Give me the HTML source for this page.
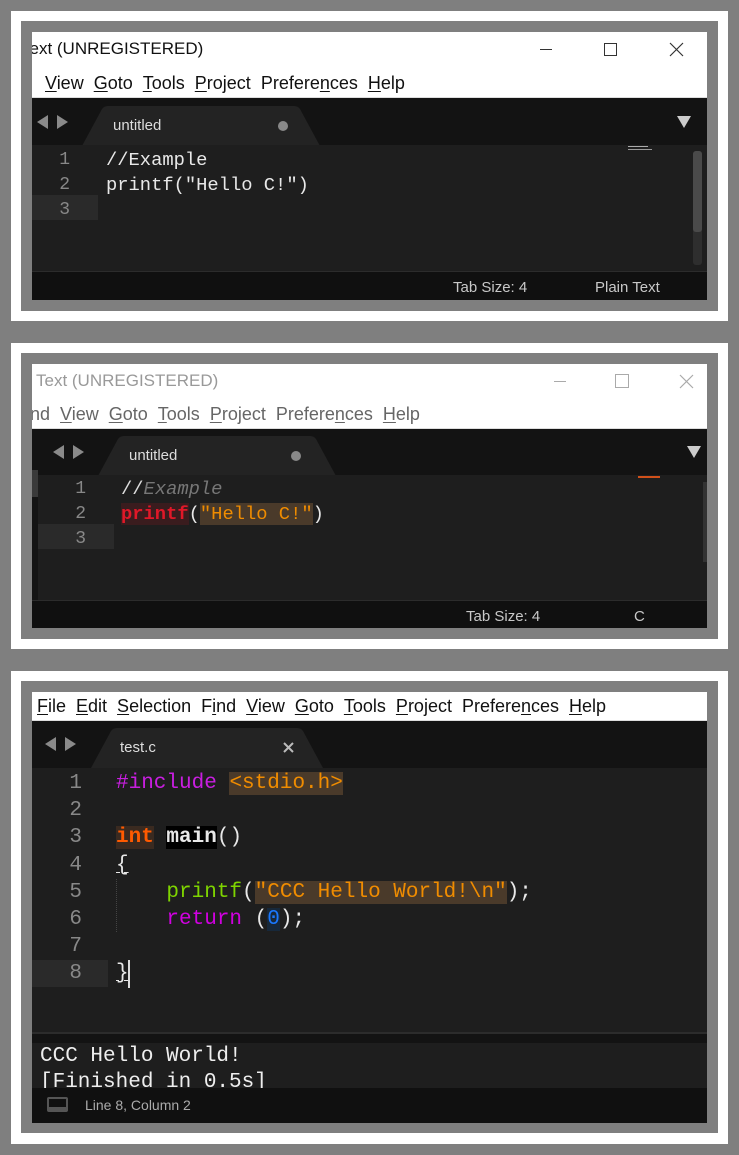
<!DOCTYPE html>
<html><head><meta charset="utf-8"><style>
*{margin:0;padding:0;box-sizing:border-box}
body{width:739px;height:1155px;background:#7f7f7f;position:relative;overflow:hidden;font-family:"Liberation Sans",sans-serif}
.a{position:absolute}
.w{background:#fff}
.g{background:#7f7f7f}
.win{position:absolute;left:32px;width:675px;overflow:hidden;background:#fff}
.t{position:absolute;white-space:nowrap}
.mono{font-family:"Liberation Mono",monospace;white-space:pre}
u{text-decoration:underline;text-underline-offset:2px;text-decoration-thickness:1px}
.menu{font-size:18px}
</style></head><body>

<!-- Panel 1 -->
<div class="a w" style="left:11px;top:11px;width:717px;height:310px"></div>
<div class="a g" style="left:21px;top:21px;width:697px;height:290px"></div>
<div class="win" style="top:32px;height:268px">
  <div class="t" style="left:-11px;top:7px;font-size:17px;color:#111">Text (UNREGISTERED)</div>
  <div class="a" style="left:508px;top:17px;width:12px;height:1px;background:#333"></div>
  <div class="a" style="left:572px;top:11px;width:13px;height:13px;border:1px solid #333"></div>
  <svg class="a" style="left:637px;top:10px" width="15" height="15"><path d="M1 1L14 14M14 1L1 14" stroke="#333" stroke-width="1.2"/></svg>
  <div class="t menu" style="left:13px;top:41px;color:#111"><u>V</u>iew&nbsp;&nbsp;<u>G</u>oto&nbsp;&nbsp;<u>T</u>ools&nbsp;&nbsp;<u>P</u>roject&nbsp;&nbsp;Prefere<u>n</u>ces&nbsp;&nbsp;<u>H</u>elp</div>
  <div class="a" style="left:0;top:65px;width:675px;height:1px;background:#ddd"></div>
  <div class="a" style="left:0;top:66px;width:675px;height:47px;background:#131313"></div>
  <svg class="a" style="left:5px;top:83px" width="32" height="14"><path d="M0 7L11 0V14Z M31 7L20 0V14Z" fill="#8a8a8a"/></svg>
  <svg class="a" style="left:50px;top:74px" width="240" height="40"><path d="M0 40L20 3Q22 0 26 0H212Q216 0 218 3L238 40Z" fill="#232323"/></svg>
  <div class="t" style="left:81px;top:85px;font-size:15px;color:#ddd">untitled</div>
  <div class="a" style="left:246px;top:89px;width:10px;height:10px;border-radius:50%;background:#888"></div>
  <svg class="a" style="left:645px;top:84px" width="14" height="12"><path d="M0 0H14L7 12Z" fill="#ccc"/></svg>
  <div class="a" style="left:0;top:113px;width:675px;height:126px;background:#1e1e1e"></div>
  <div class="a" style="left:0;top:163px;width:66px;height:25px;background:#2a2a2a"></div>
  <div class="t mono" style="left:20px;top:116px;font-size:18px;line-height:25px;color:#888;text-align:right;width:18px">1<br>2<br>3</div>
  <div class="t mono" style="left:74px;top:116px;font-size:18.8px;line-height:25px;color:#e8e8e8">//Example<br>printf("Hello C!")</div>
  <div class="a" style="left:596px;top:114px;width:20px;height:1px;background:#aaa"></div>
  <div class="a" style="left:596px;top:117px;width:24px;height:1px;background:#999"></div>
  <div class="a" style="left:661px;top:119px;width:9px;height:114px;border-radius:3px;background:#2e2e2e"></div>
  <div class="a" style="left:661px;top:119px;width:9px;height:81px;border-radius:3px;background:#4a4a4a"></div>
  <div class="a" style="left:0;top:239px;width:675px;height:1px;background:#2c2c2c"></div>
  <div class="a" style="left:0;top:240px;width:675px;height:28px;background:#101010"></div>
  <div class="t" style="left:421px;top:247px;font-size:15px;color:#c8c8c8">Tab Size: 4</div>
  <div class="t" style="left:563px;top:247px;font-size:15px;color:#c8c8c8">Plain Text</div>
</div>

<!-- Panel 2 -->
<div class="a w" style="left:11px;top:343px;width:717px;height:306px"></div>
<div class="a g" style="left:21px;top:353px;width:697px;height:286px"></div>
<div class="win" style="top:364px;height:264px">
  <div class="t" style="left:4px;top:7px;font-size:17px;color:#999">Text (UNREGISTERED)</div>
  <div class="a" style="left:522px;top:17px;width:12px;height:1px;background:#aaa"></div>
  <div class="a" style="left:583px;top:10px;width:14px;height:14px;border:1px solid #aaa"></div>
  <svg class="a" style="left:647px;top:10px" width="15" height="15"><path d="M1 1L14 14M14 1L1 14" stroke="#aaa" stroke-width="1.2"/></svg>
  <div class="t menu" style="left:-2px;top:40px;color:#666">nd&nbsp;&nbsp;<u>V</u>iew&nbsp;&nbsp;<u>G</u>oto&nbsp;&nbsp;<u>T</u>ools&nbsp;&nbsp;<u>P</u>roject&nbsp;&nbsp;Prefere<u>n</u>ces&nbsp;&nbsp;<u>H</u>elp</div>
  <div class="a" style="left:0;top:64px;width:675px;height:1px;background:#ddd"></div>
  <div class="a" style="left:0;top:65px;width:675px;height:46px;background:#131313"></div>
  <svg class="a" style="left:21px;top:81px" width="32" height="14"><path d="M0 7L11 0V14Z M31 7L20 0V14Z" fill="#8a8a8a"/></svg>
  <svg class="a" style="left:66px;top:72px" width="240" height="40"><path d="M0 40L20 3Q22 0 26 0H212Q216 0 218 3L238 40Z" fill="#232323"/></svg>
  <div class="t" style="left:97px;top:83px;font-size:15px;color:#ddd">untitled</div>
  <div class="a" style="left:259px;top:87px;width:10px;height:10px;border-radius:50%;background:#888"></div>
  <svg class="a" style="left:655px;top:82px" width="14" height="12"><path d="M0 0H14L7 12Z" fill="#ccc"/></svg>
  <div class="a" style="left:0;top:111px;width:675px;height:126px;background:#1e1e1e"></div>
  <div class="a" style="left:0;top:111px;width:6px;height:126px;background:#141414"></div>
  <div class="a" style="left:0;top:106px;width:6px;height:27px;background:#3a3a3a"></div>
  <div class="a" style="left:6px;top:160px;width:76px;height:25px;background:#2a2a2a"></div>
  <div class="t mono" style="left:36px;top:113px;font-size:18px;line-height:25px;color:#888;text-align:right;width:18px">1<br>2<br>3</div>
  <div class="t mono" style="left:89px;top:113px;font-size:18.8px;line-height:25px;color:#e8e8e8"><span style="color:#ddd">//</span><i style="color:#777">Example</i><br><span style="color:#e01828;background:#3a1c1e;font-weight:bold">printf</span>(<span style="background:#4a3a2a;color:#f08c00">"Hello C!"</span>)</div>
  <div class="a" style="left:606px;top:112px;width:22px;height:2px;background:#d0501a"></div>
  <div class="a" style="left:671px;top:118px;width:4px;height:80px;background:#333"></div>
  <div class="a" style="left:0;top:236px;width:675px;height:1px;background:#2c2c2c"></div>
  <div class="a" style="left:0;top:237px;width:675px;height:27px;background:#101010"></div>
  <div class="t" style="left:434px;top:244px;font-size:15px;color:#c8c8c8">Tab Size: 4</div>
  <div class="t" style="left:602px;top:244px;font-size:15px;color:#c8c8c8">C</div>
</div>

<!-- Panel 3 -->
<div class="a w" style="left:11px;top:671px;width:717px;height:473px"></div>
<div class="a g" style="left:21px;top:681px;width:697px;height:452px"></div>
<div class="win" style="top:692px;height:431px">
  <div class="t menu" style="left:5px;top:4px;color:#111"><u>F</u>ile&nbsp;&nbsp;<u>E</u>dit&nbsp;&nbsp;<u>S</u>election&nbsp;&nbsp;F<u>i</u>nd&nbsp;&nbsp;<u>V</u>iew&nbsp;&nbsp;<u>G</u>oto&nbsp;&nbsp;<u>T</u>ools&nbsp;&nbsp;<u>P</u>roject&nbsp;&nbsp;Prefere<u>n</u>ces&nbsp;&nbsp;<u>H</u>elp</div>
  <div class="a" style="left:0;top:28px;width:675px;height:1px;background:#ddd"></div>
  <div class="a" style="left:0;top:29px;width:675px;height:47px;background:#131313"></div>
  <svg class="a" style="left:13px;top:45px" width="32" height="14"><path d="M0 7L11 0V14Z M31 7L20 0V14Z" fill="#8a8a8a"/></svg>
  <svg class="a" style="left:59px;top:36px" width="240" height="40"><path d="M0 40L20 3Q22 0 26 0H206Q210 0 212 3L232 40Z" fill="#232323"/></svg>
  <div class="t" style="left:88px;top:47px;font-size:15px;color:#ddd">test.c</div>
  <svg class="a" style="left:251px;top:50px" width="11" height="11"><path d="M1 1L10 10M10 1L1 10" stroke="#bbb" stroke-width="2"/></svg>
  <div class="a" style="left:0;top:76px;width:675px;height:264px;background:#1e1e1e"></div>
  <div class="a" style="left:0;top:268px;width:76px;height:27px;background:#2a2a2a"></div>
  <div class="t mono" style="left:30px;top:78px;font-size:21px;line-height:27.2px;color:#888;text-align:right;width:20px">1<br>2<br>3<br>4<br>5<br>6<br>7<br>8</div>
  <div class="a" style="left:84px;top:187px;width:0;height:53px;border-left:1px dotted #444"></div>
  <div class="t mono" style="left:84px;top:78px;font-size:21px;line-height:27.2px;color:#e8e8e8"><span style="color:#c81ee0">#include</span> <span style="background:#4a3a2a;color:#f08c00">&lt;stdio.h&gt;</span>
 
<span style="color:#ff5a00;background:#3a2a20;font-weight:bold">int</span> <span style="background:#000;color:#e8e8e8;font-weight:bold">main</span>()
<u>{</u>
    <span style="color:#7ed400">printf</span>(<span style="background:#4a3a2a;color:#f08c00">"CCC Hello World!\n"</span>);
    <span style="color:#d000e0">return</span> (<span style="background:#17283a;color:#1a78ff">0</span>);
 
<u>}</u></div>
  <div class="a" style="left:96px;top:268px;width:2px;height:28px;background:#ddd"></div>
  <div class="a" style="left:0;top:340px;width:675px;height:2px;background:#2c2c2c"></div>
  <div class="a" style="left:0;top:342px;width:675px;height:9px;background:#131313"></div>
  <div class="a" style="left:0;top:351px;width:675px;height:45px;background:#1e1e1e;overflow:hidden">
    <div class="t mono" style="left:8px;top:1px;font-size:21px;line-height:26px;color:#eee">CCC Hello World!
[Finished in 0.5s]</div>
  </div>
  <div class="a" style="left:0;top:396px;width:675px;height:35px;background:#101010"></div>
  <div class="a" style="left:15px;top:405px;width:21px;height:15px;border:2px solid #555;border-bottom:5px solid #555;border-radius:2px"></div>
  <div class="t" style="left:53px;top:405px;font-size:14px;color:#aaa">Line 8, Column 2</div>
</div>
</body></html>
